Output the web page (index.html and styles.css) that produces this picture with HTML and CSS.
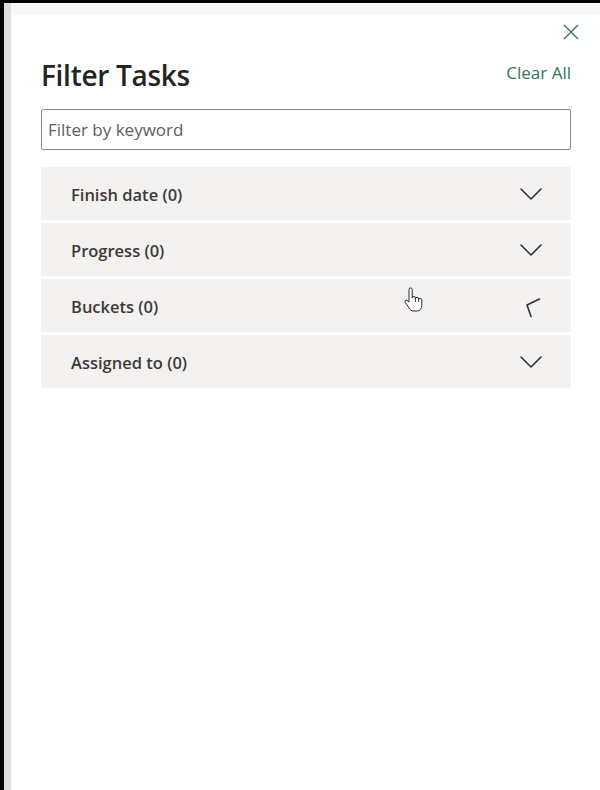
FILE: index.html
```html
<!DOCTYPE html>
<html lang="en">
<head>
<meta charset="utf-8">
<title>Filter Tasks</title>
<link rel="stylesheet" href="styles.css">
</head>
<body>
<div class="screen">
  <div class="edge-black"></div>
  <div class="edge-grey"></div>
  <div class="panel">
    <div class="topbar">
      <button class="close" aria-label="Close">
        <svg width="16" height="16" viewBox="0 0 16 16"><path d="M1 1 L15 15 M15 1 L1 15" stroke="currentColor" stroke-width="1.4" fill="none"/></svg>
      </button>
    </div>
    <div class="title-row">
      <h1 class="title">Filter Tasks</h1>
      <a class="clear" href="#">Clear All</a>
    </div>
    <input class="keyword" type="text" placeholder="Filter by keyword">
    <div class="groups">
      <div class="group">
        <span class="label">Finish date (0)</span>
        <svg class="chev" width="22" height="12" viewBox="0 0 22 12"><path d="M1 1 L11 11 L21 1" /></svg>
      </div>
      <div class="group">
        <span class="label">Progress (0)</span>
        <svg class="chev" width="22" height="12" viewBox="0 0 22 12"><path d="M1 1 L11 11 L21 1" /></svg>
      </div>
      <div class="group">
        <span class="label">Buckets (0)</span>
        <svg class="chev" width="22" height="12" viewBox="0 0 22 12"><path d="M19.5 -1 L7 5 L11 16.5" /></svg>
        <svg class="cursor" width="22" height="26" viewBox="0 0 22 26">
          <path d="M6 2.5 a1.6 1.6 0 0 1 3.2 0 V11 a1.6 1.6 0 0 1 3.2 0 V12 a1.6 1.6 0 0 1 3.2 0 V13 a1.6 1.6 0 0 1 3.2 0 V18.5 c0 3.2 -2.2 5.5 -4.6 5.5 H10.5 c-2.2 0 -3.4 -1.1 -4.4 -3 L2.2 15.2 c-0.8 -1.2 0.6 -2.6 1.9 -1.7 L6 15 Z" fill="#fff" stroke="#2a2a2a" stroke-width="1" stroke-linejoin="round"/>
          <path d="M12.4 11.5 V15 M15.6 12.5 V15" stroke="#2a2a2a" stroke-width="0.9" fill="none"/>
        </svg>
      </div>
      <div class="group">
        <span class="label">Assigned to (0)</span>
        <svg class="chev" width="22" height="12" viewBox="0 0 22 12"><path d="M1 1 L11 11 L21 1" /></svg>
      </div>
    </div>
  </div>
</div>
</body>
</html>
```

FILE: styles.css
```css
html, body {
  margin: 0;
  padding: 0;
  background: #ffffff;
}

.screen {
  display: flex;
  width: 600px;
  height: 790px;
  border-top: 3px solid #000;
  box-sizing: border-box;
  font-family: "Open Sans", "Noto Sans", sans-serif;
}

.edge-black {
  width: 4px;
  background: #050505;
}

.edge-grey {
  width: 7px;
  background: #dedede;
}

.panel {
  flex: 1;
  display: flex;
  flex-direction: column;
  padding: 0 29px 0 30px;
  background: linear-gradient(#f8f8f8 0, #f8f8f8 12px, #ffffff 12px);
}

.topbar {
  display: flex;
  justify-content: flex-end;
  margin-top: 21px;
  height: 16px;
}

.close {
  border: 0;
  background: none;
  padding: 0;
  margin-right: -8px;
  color: #2f7a52;
  display: flex;
}

.title-row {
  display: flex;
  justify-content: space-between;
  align-items: baseline;
  margin-top: 16px;
}

.title {
  margin: 0;
  font-size: 28px;
  line-height: 38px;
  font-weight: 600;
  color: #252423;
  letter-spacing: -0.3px;
}

.clear {
  font-size: 17px;
  color: #2f7a52;
  text-decoration: none;
  position: relative;
  top: -7px;
}

.keyword {
  margin-top: 15px;
  height: 41px;
  box-sizing: border-box;
  border: 1px solid #8a8886;
  border-radius: 2px;
  padding: 0 6px;
  font-family: inherit;
  font-size: 17px;
  color: #323130;
  outline: none;
}

.keyword::placeholder {
  color: #605e5c;
}

.groups {
  margin-top: 17px;
  display: flex;
  flex-direction: column;
  gap: 3px;
}

.group {
  position: relative;
  height: 53px;
  background: #f3f2f1;
  display: flex;
  align-items: center;
  justify-content: space-between;
  padding: 0 29px 0 30px;
}

.label {
  font-size: 16.5px;
  font-weight: 600;
  color: #3b3a39;
  position: relative;
  top: 1px;
}

.chev {
  overflow: visible;
}

.chev path {
  fill: none;
  stroke: #323130;
  stroke-width: 1.6;
  stroke-linecap: round;
  stroke-linejoin: round;
}

.cursor {
  position: absolute;
  left: 362px;
  top: 8px;
}
```
